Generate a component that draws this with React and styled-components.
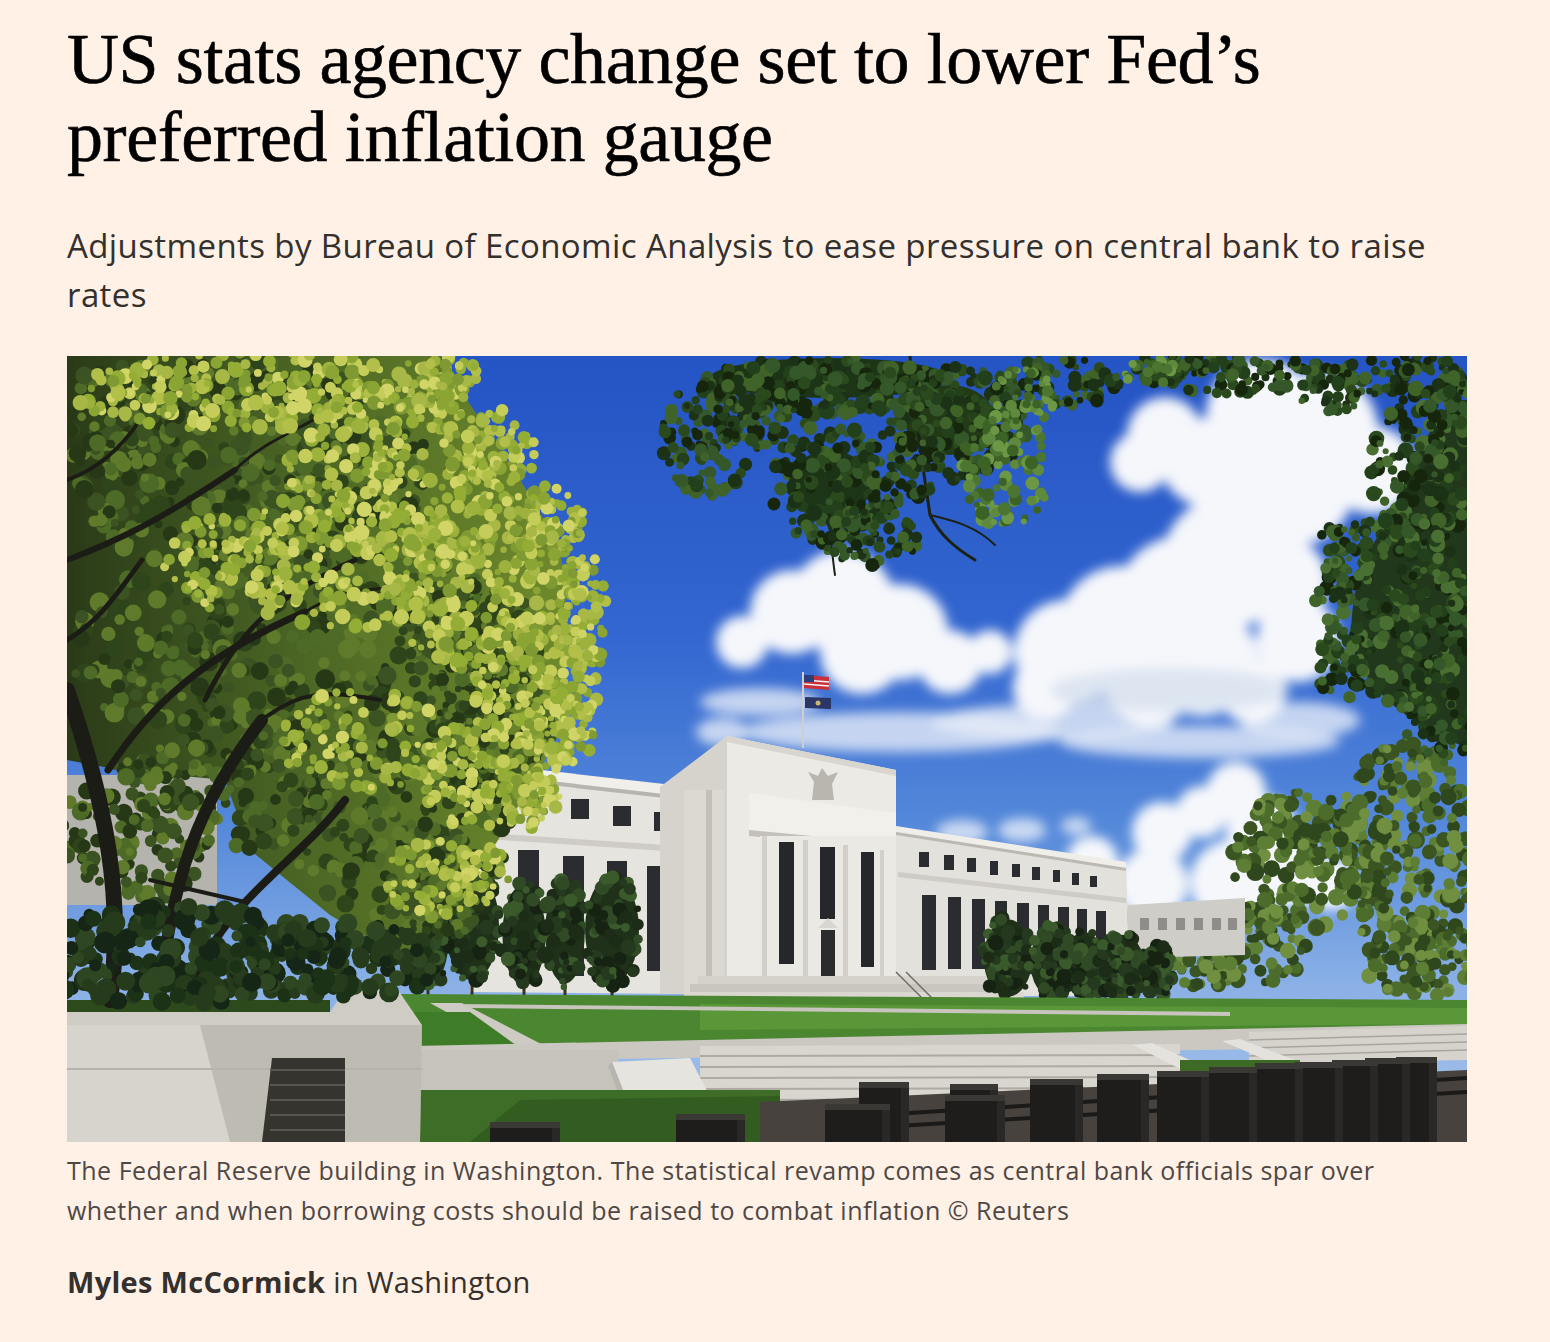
import React from "react";
import styled, { createGlobalStyle } from "styled-components";

const GlobalStyle = createGlobalStyle`
  html, body {
    margin: 0;
    padding: 0;
    background: #fff1e5;
  }
  body {
    font-family: "Open Sans", "Liberation Sans", sans-serif;
    color: #33302e;
  }
`;

const Page = styled.main`
  width: 1550px;
  min-height: 1342px;
  box-sizing: border-box;
  padding: 20px 0 0 67px;
`;

const Headline = styled.h1`
  margin: 0;
  font-family: "Liberation Serif", "Times New Roman", serif;
  font-weight: 400;
  font-size: 72px;
  line-height: 78px;
  letter-spacing: -0.4px;
  color: #000;
  -webkit-text-stroke: 0.6px #000;
`;

const Standfirst = styled.p`
  margin: 45px 0 0;
  width: 1400px;
  font-size: 33px;
  line-height: 49px;
  letter-spacing: 0.4px;
  color: #33302e;
`;

const Figure = styled.figure`
  margin: 37px 0 0;
  width: 1400px;
`;

const Photo = styled.div`
  width: 1400px;
  height: 786px;
  overflow: hidden;
  background: #3b68d0;

  svg {
    display: block;
  }
`;

const Caption = styled.figcaption`
  margin-top: 8px;
  font-size: 25px;
  line-height: 40px;
  letter-spacing: 0.5px;
  color: #4d4845;
`;

const Byline = styled.p`
  margin: 34px 0 0;
  font-size: 29px;
  line-height: 36px;
  letter-spacing: 0.3px;
  color: #33302e;

  strong {
    font-weight: 700;
  }
`;

// seeded random so the leaves land in the same place every time
function rng(seed) {
  let a = seed;
  return () => {
    a |= 0;
    a = (a + 0x6d2b79f5) | 0;
    let t = Math.imul(a ^ (a >>> 15), 1 | a);
    t = (t + Math.imul(t ^ (t >>> 7), 61 | t)) ^ t;
    return ((t ^ (t >>> 14)) >>> 0) / 4294967296;
  };
}

function scatter(seed, clusters, palette) {
  const r = rng(seed);
  const out = [];
  clusters.forEach(([cx, cy, rx, ry, n, rmin, rmax]) => {
    for (let i = 0; i < n; i++) {
      const ang = r() * Math.PI * 2;
      const d = Math.sqrt(r());
      out.push({
        x: cx + Math.cos(ang) * rx * d,
        y: cy + Math.sin(ang) * ry * d,
        r: rmin + r() * (rmax - rmin),
        c: palette[Math.floor(r() * palette.length)],
      });
    }
  });
  return out;
}

const darkGreens = ["#1c3015", "#2b4a1d", "#36582a", "#16260f", "#3f6329", "#24401a"];

const leftTreeDark = scatter(
  11,
  [
    [250, 470, 180, 110, 380, 4, 10],
    [300, 650, 230, 110, 380, 4, 10],
    [400, 830, 110, 90, 200, 4, 9],
    [230, 790, 120, 60, 150, 4, 9],
    [120, 420, 55, 60, 90, 4, 9],
    [140, 830, 80, 70, 120, 4, 9],
    [500, 720, 60, 60, 150, 3, 8],
    [470, 640, 70, 60, 150, 3, 8],
    [440, 900, 40, 40, 70, 3, 8],
  ],
  ["#3b5220", "#2e441a", "#4d6a28", "#5e7a2c", "#253818"]
);

const leftTreeLight = scatter(
  23,
  [
    [270, 392, 200, 40, 260, 3, 8],
    [390, 470, 105, 85, 230, 3, 8],
    [480, 580, 95, 90, 240, 3, 8],
    [535, 680, 65, 70, 180, 3, 7],
    [480, 775, 60, 55, 130, 3, 7],
    [350, 560, 130, 70, 200, 3, 8],
    [430, 880, 45, 40, 70, 3, 7],
    [360, 740, 90, 50, 100, 3, 7],
    [230, 560, 70, 50, 70, 3, 7],
    [500, 450, 35, 45, 70, 3, 7],
    [545, 525, 40, 40, 80, 3, 7],
    [585, 615, 22, 65, 80, 3, 7],
    [560, 730, 35, 40, 80, 3, 7],
    [530, 800, 30, 30, 60, 3, 7],
    [480, 875, 30, 30, 50, 3, 7],
    [450, 380, 30, 25, 40, 3, 7],
  ],
  ["#9db23c", "#b2c049", "#8ba534", "#c5cd5a", "#7f9a30", "#a8b847", "#d1d568", "#94ad36"]
);

const shrubs = scatter(
  31,
  [
    [180, 955, 160, 50, 240, 5, 11],
    [335, 962, 110, 40, 120, 5, 10],
  ],
  ["#1e3017", "#263b1b", "#172613", "#2f4620"]
);

const topCanopy = scatter(
  41,
  [
    [830, 385, 130, 30, 200, 3, 8],
    [705, 440, 45, 60, 100, 3, 7],
    [760, 415, 50, 40, 80, 3, 7],
    [830, 485, 65, 60, 160, 3, 8],
    [870, 535, 50, 32, 80, 3, 7],
    [960, 420, 70, 60, 150, 3, 8],
    [900, 465, 40, 50, 70, 3, 7],
    [1060, 382, 60, 25, 70, 3, 7],
    [1240, 374, 100, 20, 110, 3, 7],
    [1170, 366, 40, 12, 30, 3, 6],
    [1395, 376, 70, 22, 70, 3, 7],
    [1330, 398, 30, 14, 25, 3, 6],
  ],
  darkGreens
);

const canopyLight = scatter(
  43,
  [
    [1005, 470, 45, 60, 90, 3, 7],
    [1025, 395, 30, 30, 40, 3, 6],
    [1150, 370, 30, 14, 20, 3, 6],
  ],
  ["#4d7531", "#5f8a3c", "#3c6228", "#6c9844"]
);

const rightTree = scatter(
  53,
  [
    [1420, 470, 50, 90, 160, 3, 8],
    [1395, 610, 80, 95, 260, 3, 8],
    [1440, 710, 40, 55, 70, 3, 7],
    [1450, 400, 25, 30, 40, 3, 7],
    [1345, 560, 30, 40, 50, 3, 7],
    [1340, 660, 30, 40, 40, 3, 7],
  ],
  [...darkGreens, "#4a7032"]
);

const rightLowTrees = scatter(
  67,
  [
    [1300, 860, 70, 70, 180, 4, 9],
    [1405, 850, 70, 110, 260, 4, 9],
    [1250, 945, 60, 40, 90, 4, 8],
    [1420, 960, 60, 40, 90, 4, 8],
    [1200, 960, 40, 30, 50, 4, 8],
  ],
  ["#4c6c2c", "#5d7e36", "#3a5523", "#6f8f40", "#2f461c"]
);

const cypressSpots = [
  [428, 930, 24, 62],
  [472, 925, 30, 60],
  [524, 935, 24, 55],
  [565, 932, 22, 56],
  [612, 930, 30, 58],
  [1008, 958, 27, 42],
  [1052, 962, 24, 38],
  [1084, 965, 23, 36],
  [1122, 966, 25, 34],
  [1158, 970, 15, 26],
];

const cypressLeaves = scatter(
  79,
  cypressSpots.map(([cx, cy, rx, ry]) => [cx, cy, rx, ry, 60, 3, 8]),
  ["#1c2c17", "#24391d", "#2f4a25", "#162312", "#3a5a2c"]
);

const Leaves = ({ items }) => (
  <g>
    {items.map((l, i) => (
      <circle key={i} cx={l.x} cy={l.y} r={l.r} fill={l.c} />
    ))}
  </g>
);

const clouds = [
  [1165, 435, 38], [1140, 462, 30], [1205, 462, 44], [1262, 415, 56],
  [1320, 430, 58], [1372, 470, 44], [1300, 492, 52], [1250, 515, 56],
  [1228, 562, 66], [1182, 602, 66], [1122, 630, 64], [1066, 652, 52],
  [1282, 582, 46], [1298, 640, 42], [1202, 660, 56], [1150, 680, 46],
  [1252, 690, 34], [1045, 688, 32],
  [792, 612, 42], [842, 602, 52], [900, 632, 48], [862, 652, 42],
  [950, 662, 32], [742, 642, 26], [990, 652, 22],
  [1236, 792, 30], [1202, 812, 26], [1162, 832, 30], [1262, 832, 36],
  [1292, 872, 36], [1232, 882, 42], [1152, 884, 36], [1092, 862, 26],
  [1332, 884, 26],
];

const wisps = [
  [900, 732, 160, 20], [1052, 722, 120, 18], [1200, 742, 140, 16],
  [760, 702, 60, 14], [722, 732, 26, 14], [1022, 830, 24, 12],
  [962, 832, 26, 12], [1076, 826, 15, 9], [1300, 720, 60, 18],
];

const leftUpper = [
  [527, 793, 18, 20], [571, 799, 18, 20], [613, 806, 18, 20], [654, 812, 16, 19],
];
const leftTall = [
  [518, 850, 21, 130], [563, 856, 21, 120], [607, 861, 20, 110], [647, 866, 19, 105],
];
const rightUpper = [
  [919, 852, 10, 15], [944, 855, 10, 15], [967, 858, 9, 14], [990, 861, 8, 14],
  [1012, 864, 8, 13], [1032, 867, 8, 13], [1053, 870, 7, 12], [1072, 873, 7, 12],
  [1090, 876, 7, 11],
];
const rightTall = [
  [922, 895, 14, 75], [948, 897, 13, 72], [972, 899, 13, 70], [995, 901, 12, 68],
  [1017, 903, 12, 66], [1038, 905, 11, 64], [1058, 907, 11, 62], [1077, 909, 10, 60],
  [1096, 911, 10, 58],
];

const bollards = [
  [1396, 1057, 41], [1365, 1058, 45], [1332, 1060, 46], [1295, 1062, 48],
  [1255, 1063, 48], [1209, 1067, 48], [1157, 1071, 52], [1097, 1074, 52],
  [1030, 1079, 53], [950, 1084, 48], [945, 1095, 60], [859, 1082, 50],
  [825, 1104, 65], [676, 1114, 69], [490, 1122, 70],
];

const Clouds = () => (
  <g filter="url(#soft)">
    {wisps.map(([x, y, rx, ry], i) => (
      <ellipse key={"w" + i} cx={x} cy={y} rx={rx} ry={ry} fill="#e6ecf7" opacity="0.8" />
    ))}
    {clouds.map(([x, y, r], i) => (
      <circle key={i} cx={x} cy={y} r={r} fill="#f5f7fb" />
    ))}
    <ellipse cx="1170" cy="690" rx="120" ry="22" fill="#d7e0ef" opacity="0.8" />
  </g>
);

const Rects = ({ items, fill }) => (
  <g fill={fill}>
    {items.map(([x, y, w, h], i) => (
      <rect key={i} x={x} y={y} width={w} height={h} />
    ))}
  </g>
);

const FedBuilding = () => (
  <g>
    {/* distant buildings */}
    <rect x="67" y="775" width="150" height="130" fill="#b4b3ad" />
    <polygon points="1128,905 1245,898 1245,955 1128,958" fill="#cfcdc8" />
    <g fill="#8f8d89">
      {[1140, 1158, 1176, 1194, 1212, 1228].map((x) => (
        <rect key={x} x={x} y="918" width="9" height="12" />
      ))}
    </g>

    {/* left wing */}
    <polygon points="470,766 682,790 682,994 470,992" fill="#e6e4de" />
    <polygon points="470,762 682,786 682,796 470,772" fill="#f1efea" />
    <polygon points="470,772 682,796 682,800 470,776" fill="#b8b5ae" />
    <polygon points="470,832 682,846 682,852 470,838" fill="#cfccc5" />
    <Rects items={leftUpper} fill="#2a2c2f" />
    <Rects items={leftTall} fill="#2a2c2f" />

    {/* pavilion side */}
    <polygon points="660,787 727,736 727,994 660,994" fill="#d6d3cc" />
    <rect x="684" y="790" width="40" height="204" fill="#dcd9d2" />
    <rect x="706" y="790" width="6" height="204" fill="#c3c0b8" />

    {/* pavilion front */}
    <polygon points="727,736 896,770 896,994 727,994" fill="#eceae5" />
    <polygon points="727,736 896,770 896,776 727,742" fill="#d9d6cf" />
    {/* eagle */}
    <path d="M812 800 L814 782 L808 772 L818 776 L822 768 L828 776 L838 772 L832 784 L834 800 Z" fill="#b9b6af" />

    {/* entablature */}
    <polygon points="749,793 896,813 896,846 749,832" fill="#f2f0eb" />
    <polygon points="749,830 896,844 896,850 749,836" fill="#c4c1ba" />
    {/* columns and recesses */}
    <rect x="760" y="836" width="136" height="142" fill="#ebe9e3" />
    <rect x="779" y="842" width="15" height="122" fill="#25272a" />
    <rect x="820" y="847" width="15" height="72" fill="#25272a" />
    <rect x="821" y="930" width="14" height="47" fill="#2b2c2e" />
    <path d="M818 928 L828 918 L838 928 Z" fill="#d9d6cf" />
    <rect x="861" y="852" width="13" height="115" fill="#25272a" />
    <g fill="#d3d0c9">
      <rect x="762" y="836" width="5" height="140" />
      <rect x="803" y="840" width="5" height="138" />
      <rect x="843" y="845" width="5" height="133" />
      <rect x="880" y="850" width="4" height="128" />
    </g>

    {/* right wing */}
    <polygon points="896,828 1126,864 1130,996 896,996" fill="#e3e1db" />
    <polygon points="896,826 1126,862 1126,868 896,832" fill="#f0eee9" />
    <polygon points="896,832 1126,868 1126,871 896,835" fill="#bcb9b2" />
    <polygon points="898,872 1126,898 1126,903 898,877" fill="#cfccc5" />
    <Rects items={rightUpper} fill="#2a2c2f" />
    <Rects items={rightTall} fill="#2a2c2f" />

    {/* front steps */}
    <rect x="698" y="976" width="310" height="8" fill="#d5d2cb" />
    <rect x="690" y="984" width="330" height="8" fill="#c9c6bf" />
    <rect x="684" y="992" width="340" height="8" fill="#dad7d0" />
    <g stroke="#6d6a64" strokeWidth="1.5">
      <line x1="896" y1="972" x2="930" y2="1006" />
      <line x1="906" y1="972" x2="940" y2="1006" />
    </g>

    {/* flags */}
    <line x1="803" y1="672" x2="803" y2="748" stroke="#cfcfcf" strokeWidth="2" />
    <path d="M804 675 L829 677 L829 690 L804 688 Z" fill="#c8313a" />
    <g stroke="#f3f3f3" strokeWidth="1.4">
      <line x1="804" y1="680" x2="829" y2="682" />
      <line x1="804" y1="684" x2="829" y2="686" />
    </g>
    <rect x="804" y="675" width="10" height="7" fill="#2d3d7a" />
    <path d="M805 697 L831 698 L831 709 L805 708 Z" fill="#2b3566" />
    <circle cx="818" cy="703" r="2.5" fill="#c8b671" />
  </g>
);

const Cypresses = () => (
  <g>
    <g stroke="#3a3027" strokeWidth="3">
      {cypressSpots.map(([cx, cy, , ry], i) => (
        <line key={i} x1={cx} y1={cy + ry - 10} x2={cx} y2={cy + ry + 20} />
      ))}
    </g>
    {cypressSpots.map(([cx, cy, rx, ry], i) => (
      <ellipse key={i} cx={cx} cy={cy} rx={rx * 0.9} ry={ry * 0.92} fill="#1f3119" />
    ))}
    <Leaves items={cypressLeaves} />
  </g>
);

const Trunks = () => (
  <g stroke="#1f1e17" fill="none" strokeLinecap="round">
    <path d="M110 1000 C125 900 105 800 67 690" strokeWidth="16" />
    <path d="M160 1000 C170 880 200 800 262 720" strokeWidth="12" />
    <path d="M195 980 C225 900 300 860 345 800" strokeWidth="8" />
    <path d="M108 770 C150 705 205 655 305 612" strokeWidth="7" />
    <path d="M67 560 C120 540 160 520 235 470" strokeWidth="6" />
    <path d="M205 700 C235 640 265 600 355 560" strokeWidth="5" />
    <path d="M67 640 C100 620 112 600 142 560" strokeWidth="5" />
    <path d="M150 880 L245 902" strokeWidth="4" />
    <path d="M262 720 C300 690 330 690 380 700" strokeWidth="4" />
    <path d="M235 470 C265 440 300 430 330 410" strokeWidth="3" />
    <path d="M305 612 C340 590 380 585 420 590" strokeWidth="3" />
    <path d="M67 480 C95 470 120 450 140 420" strokeWidth="4" />
  </g>
);

const CanopyBranches = () => (
  <g stroke="#1a2212" fill="none" strokeLinecap="round">
    <path d="M910 356 C915 420 925 480 930 515 C940 535 955 548 975 560" strokeWidth="3" />
    <path d="M930 515 C950 520 975 525 995 545" strokeWidth="2" />
    <path d="M828 500 C830 530 832 555 835 575" strokeWidth="2" />
  </g>
);

const Grounds = () => (
  <g>
    {/* back lawn */}
    <polygon points="400,994 1467,1000 1467,1030 400,1046" fill="#4b8630" />
    <polygon points="700,1004 1467,1008 1467,1024 700,1030" fill="#5a9738" />
    {/* walkways */}
    <polygon points="430,1003 462,1003 545,1046 512,1048" fill="#cdcbc4" />
    <polygon points="460,1004 1230,1012 1230,1016 470,1008" fill="#c7c5be" />
    <polygon points="414,1012 470,1012 520,1048 414,1050" fill="#3f7c27" />

    {/* plaza */}
    <polygon points="414,1046 1467,1024 1467,1046 414,1062" fill="#cbc8c1" />
    {/* upper right steps */}
    <polygon points="1249,1032 1467,1026 1467,1060 1249,1064" fill="#d6d3cc" />
    <g stroke="#a9a69f" strokeWidth="1.5">
      <line x1="1249" y1="1040" x2="1467" y2="1034" />
      <line x1="1249" y1="1048" x2="1467" y2="1042" />
      <line x1="1249" y1="1056" x2="1467" y2="1050" />
    </g>

    {/* low wall and lower steps */}
    <rect x="414" y="1050" width="204" height="40" fill="#c6c3bb" />
    <polygon points="700,1046 1180,1044 1180,1112 700,1114" fill="#d9d6cf" />
    <g stroke="#aeaaa2" strokeWidth="2">
      {[1056, 1067, 1078, 1089, 1100].map((y) => (
        <line key={y} x1="700" y1={y} x2="1180" y2={y - 1} />
      ))}
    </g>

    {/* slabs */}
    <polygon points="612,1062 690,1058 716,1108 632,1113" fill="#e6e4de" />
    <polygon points="612,1062 632,1113 626,1114 608,1066" fill="#b8b5ae" />
    <polygon points="1133,1045 1152,1043 1212,1070 1190,1074" fill="#e4e2dc" />
    <polygon points="1222,1041 1240,1039 1300,1062 1280,1066" fill="#e4e2dc" />

    {/* lower lawn and dark pavement */}
    <polygon points="400,1090 780,1090 780,1142 400,1142" fill="#3e6d27" />
    <polygon points="520,1100 780,1096 780,1142 470,1142" fill="#2f5520" opacity="0.7" />
    <polygon points="760,1102 1467,1070 1467,1142 760,1142" fill="#47423d" />
    <polygon points="1180,1060 1300,1060 1300,1090 1180,1090" fill="#3d6b26" />

    {/* rail */}
    <g stroke="#1b1a18" strokeWidth="4">
      <line x1="830" y1="1118" x2="1467" y2="1078" />
      <line x1="830" y1="1130" x2="1467" y2="1092" />
    </g>
    {bollards.map(([x, y, w], i) => (
      <g key={i}>
        <rect x={x} y={y} width={w} height={1142 - y} fill="#1e1d1b" />
        <rect x={x} y={y} width={w} height="6" fill="#3a3835" />
        <rect x={x + w - 8} y={y + 6} width="8" height={1136 - y} fill="#2a2826" />
      </g>
    ))}

    {/* big wall bottom-left */}
    <polygon points="67,1000 330,1000 330,1012 67,1012" fill="#2c4a1c" />
    <polygon points="67,1012 330,1012 345,990 398,990 422,1025 67,1025" fill="#cfccc4" />
    <polygon points="67,1025 422,1025 420,1142 67,1142" fill="#d7d4cd" />
    <polygon points="200,1025 422,1025 420,1142 230,1142" fill="#a9a69f" opacity="0.55" />
    <rect x="67" y="1068" width="355" height="2" fill="#b6b3ac" />
    <polygon points="272,1058 345,1058 345,1142 262,1142" fill="#35342f" />
    <g stroke="#57554f" strokeWidth="2">
      {[1070, 1085, 1100, 1115, 1130].map((y) => (
        <line key={y} x1="270" y1={y} x2="345" y2={y} />
      ))}
    </g>
  </g>
);

const FedPhoto = () => (
  <svg width="1400" height="786" viewBox="0 0 1400 786">
    <defs>
      <linearGradient id="sky" x1="0" y1="0" x2="0" y2="1">
        <stop offset="0" stopColor="#2554c4" />
        <stop offset="0.35" stopColor="#3366d0" />
        <stop offset="0.6" stopColor="#5589da" />
        <stop offset="0.8" stopColor="#8ab0e6" />
        <stop offset="1" stopColor="#a8c4ea" />
      </linearGradient>
      <linearGradient id="crown" x1="0" y1="0" x2="1" y2="0">
        <stop offset="0" stopColor="#2a3a18" />
        <stop offset="0.45" stopColor="#4a6424" />
        <stop offset="1" stopColor="#6f8a2c" />
      </linearGradient>
      <filter id="soft" x="-10%" y="-10%" width="120%" height="120%">
        <feGaussianBlur stdDeviation="6" />
      </filter>
      <filter id="leafsoft">
        <feGaussianBlur stdDeviation="0.6" />
      </filter>
    </defs>
    <g transform="translate(-67 -356)">
      <rect x="67" y="356" width="1400" height="786" fill="url(#sky)" />
      <Clouds />
      <g filter="url(#leafsoft)">
        <Leaves items={rightLowTrees} />
      </g>
      <FedBuilding />
      <Cypresses />
      <Grounds />
      <path
        d="M67 356 L440 356 C470 410 520 470 560 550 C574 640 566 720 545 760 C515 810 490 860 455 900 L405 960 L330 915 L250 850 L225 780 L120 770 L67 760 Z"
        fill="url(#crown)"
      />
      <g filter="url(#leafsoft)">
        <Leaves items={leftTreeDark} />
        <Trunks />
        <Leaves items={leftTreeLight} />
        <Leaves items={shrubs} />
        <ellipse cx="830" cy="378" rx="120" ry="20" fill="#1f3517" />
        <ellipse cx="830" cy="485" rx="40" ry="35" fill="#1f3517" />
        <ellipse cx="950" cy="420" rx="45" ry="35" fill="#223a19" />
        <CanopyBranches />
        <Leaves items={topCanopy} />
        <Leaves items={canopyLight} />
        <path
          d="M1467 400 L1452 400 C1425 435 1400 482 1392 520 C1362 548 1348 600 1352 648 C1368 692 1410 725 1467 748 Z"
          fill="#22391a"
        />
        <Leaves items={rightTree} />
      </g>
    </g>
  </svg>
);

export default function App() {
  return (
    <>
      <GlobalStyle />
      <Page>
        <Headline>
          US stats agency change set to lower Fed’s
          <br />
          preferred inflation gauge
        </Headline>
        <Standfirst>
          Adjustments by Bureau of Economic Analysis to ease pressure on central
          bank to raise rates
        </Standfirst>
        <Figure>
          <Photo>
            <FedPhoto />
          </Photo>
          <Caption>
            The Federal Reserve building in Washington. The statistical revamp
            comes as central bank officials spar over whether and when borrowing
            costs should be raised to combat inflation © Reuters
          </Caption>
        </Figure>
        <Byline>
          <strong>Myles McCormick</strong> in Washington
        </Byline>
      </Page>
    </>
  );
}
